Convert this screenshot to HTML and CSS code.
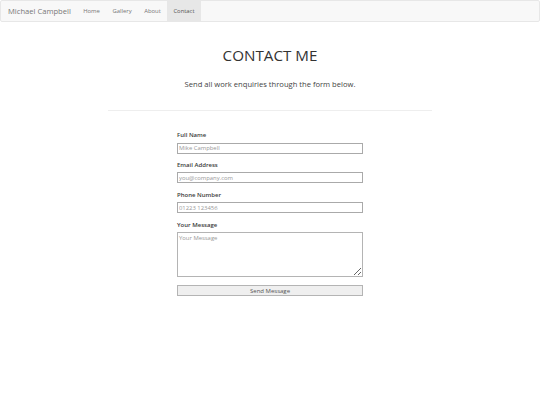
FILE: index.html
```html
<!DOCTYPE html>
<html>

<head>
    <meta charset="utf-8">
    <title>Contact | Michael Campbell</title>
    <link rel="stylesheet" href="styles.css">
</head>

<body>
    <nav class="navbar">
        <a class="brand" href="#">Michael Campbell</a>
        <ul class="nav">
            <li><a href="#">Home</a></li>
            <li><a href="#">Gallery</a></li>
            <li><a href="#">About</a></li>
            <li class="active"><a href="#">Contact</a></li>
        </ul>
    </nav>

    <div class="container">
        <h1>CONTACT ME</h1>
        <p class="lead">Send all work enquiries through the form below.</p>
        <hr>

        <form class="contact-form">
            <div class="form-group">
                <label for="name">Full Name</label>
                <input type="text" id="name" placeholder="Mike Campbell">
            </div>
            <div class="form-group">
                <label for="email">Email Address</label>
                <input type="email" id="email" placeholder="you@company.com">
            </div>
            <div class="form-group">
                <label for="phone">Phone Number</label>
                <input type="tel" id="phone" placeholder="01223 123456">
            </div>
            <div class="form-group">
                <label for="message">Your Message</label>
                <textarea id="message" placeholder="Your Message"></textarea>
            </div>
            <button type="submit">Send Message</button>
        </form>
    </div>
</body>

</html>
```

FILE: styles.css
```css
html {
    font-family: 'Open Sans', sans-serif;
    color: #333;
}

body {
    margin: 0;
    font-size: 6px;
    line-height: 1.43;
}

.navbar {
    display: flex;
    align-items: stretch;
    height: 20px;
    background: #f8f8f8;
    border: 1px solid #e7e7e7;
    border-radius: 2px;
    margin-bottom: 25px;
}

.navbar a {
    text-decoration: none;
}

.brand {
    display: flex;
    align-items: center;
    padding: 0 6px 0 7px;
    font-size: 7.6px;
    color: #777;
}

.nav {
    display: flex;
    list-style: none;
    margin: 0;
    padding: 0;
}

.nav a {
    display: flex;
    align-items: center;
    height: 100%;
    padding: 0 6.3px;
    font-size: 5.9px;
    color: #777;
}

.nav .active a {
    background: #e7e7e7;
    color: #555;
}

.container {
    width: 324px;
    margin: 0 auto;
    text-align: center;
}

h1 {
    margin: 0;
    font-size: 15.2px;
    font-weight: 400;
    line-height: 1.1;
}

.lead {
    margin: 15.5px 0 0;
    font-size: 7.6px;
    line-height: 1.4;
    color: #444;
}

hr {
    margin: 20.5px 0 0;
    border: 0;
    border-top: 1px solid #eee;
}

.contact-form {
    width: 186px;
    margin: 20px auto 0;
    text-align: left;
}

.form-group {
    margin-bottom: 7.7px;
}

label {
    display: block;
    margin-bottom: 2.6px;
    font-size: 6px;
    font-weight: 600;
    line-height: 8.6px;
    color: #3a3a3a;
}

input,
textarea {
    display: block;
    box-sizing: border-box;
    width: 100%;
    height: 11px;
    margin: 0;
    padding: 0 1px;
    border: 1px solid #aaa;
    font-family: 'Open Sans', sans-serif;
    font-size: 5.9px;
    color: #333;
}

textarea {
    height: 45px;
    padding-top: 1px;
    border-color: #b4b4b4;
}

::placeholder {
    color: #999;
}

button {
    display: block;
    box-sizing: border-box;
    width: 100%;
    height: 11px;
    margin-top: 8px;
    padding: 0;
    background: #efefef;
    border: 1px solid #b4b4b4;
    font-family: 'Open Sans', sans-serif;
    font-size: 6px;
    color: #555;
}
```
